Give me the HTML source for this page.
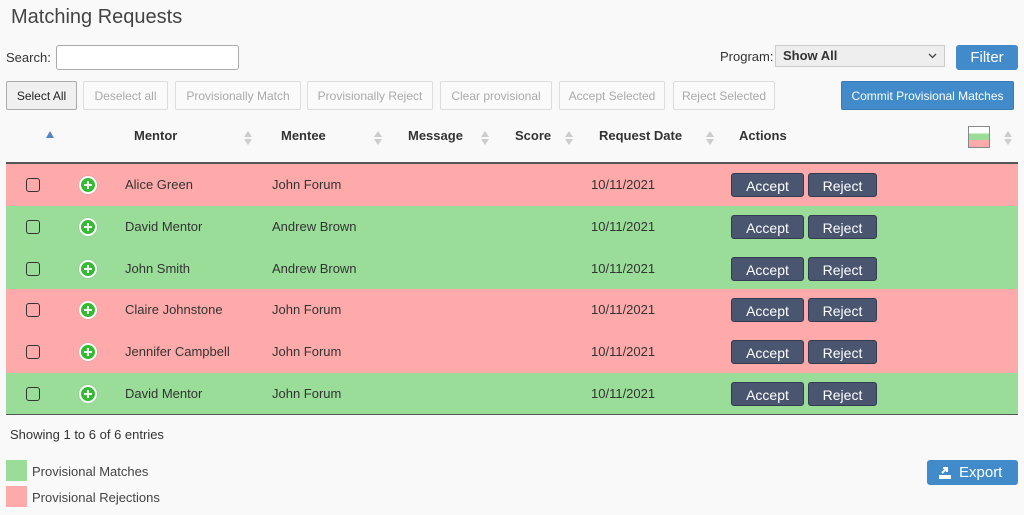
<!DOCTYPE html>
<html><head><style>
body{margin:0;width:1024px;height:515px;background:#f9f9f9;font-family:"Liberation Sans",sans-serif;color:#333;position:relative;overflow:hidden}
.a{position:absolute}
.btn{position:absolute;top:81px;height:29px;border:1px solid #ddd;background:#fafafa;color:#aaa;font-size:12px;line-height:29px;text-align:center;border-radius:2px;box-sizing:border-box}
.h{position:absolute;top:128px;font-size:13px;font-weight:bold;color:#333}
.row{position:absolute;left:6px;width:1012px;height:42px;font-size:13px}
.pink{background:#ffaaaa}.green{background:#99dd99}
.cb{position:absolute;left:20px;top:14px;width:12px;height:12px;border:1px solid #333;border-radius:3px}
.pl{position:absolute;left:73px;top:12px;width:14px;height:14px;border-radius:50%;background:#3b3;border:2px solid #fff;box-shadow:0 0 1px #888}
.pl:before{content:"";position:absolute;left:3px;top:6px;width:8px;height:2px;background:#fff}
.pl:after{content:"";position:absolute;left:6px;top:3px;width:2px;height:8px;background:#fff}
.t{position:absolute;top:13px}
.ac{position:absolute;top:9px;height:24px;background:#4a5570;color:#fff;border:1px solid #333b50;border-radius:3px;font-size:14px;line-height:24px;text-align:center;box-sizing:border-box}
</style></head><body>
<div class="a" style="left:11px;top:6px;font-size:20px;color:#444">Matching Requests</div>
<div class="a" style="left:6px;top:50px;font-size:13px">Search:</div>
<div class="a" style="left:56px;top:45px;width:183px;height:25px;border:1px solid #aaa;border-radius:3px;background:#fff;box-sizing:border-box"></div>
<div class="a" style="left:720px;top:49px;font-size:13px">Program:</div>
<div class="a" style="left:775px;top:45px;width:170px;height:22px;border:1px solid #ccc;background:#eee;box-sizing:border-box;font-size:13px;font-weight:bold;line-height:20px;padding-left:7px">Show All<svg style="position:absolute;right:7px;top:7px" width="9" height="6"><path d="M1 1l3.5 3.5L8 1" stroke="#444" fill="none" stroke-width="1.3"/></svg></div>
<div class="a" style="left:956px;top:45px;width:62px;height:25px;background:#428bca;border-radius:3px;color:#fff;font-size:15px;text-align:center;line-height:26px">Filter</div>
<div class="btn" style="left:6px;width:71px;border-color:#aaa;background:#f0f0f0;color:#222">Select All</div>
<div class="btn" style="left:83px;width:85px">Deselect all</div>
<div class="btn" style="left:175px;width:126px">Provisionally Match</div>
<div class="btn" style="left:307px;width:126px">Provisionally Reject</div>
<div class="btn" style="left:440px;width:112px">Clear provisional</div>
<div class="btn" style="left:559px;width:106px">Accept Selected</div>
<div class="btn" style="left:673px;width:102px">Reject Selected</div>
<div class="btn" style="left:841px;width:173px;background:#428bca;border-color:#3a7ab5;color:#fff">Commit Provisional Matches</div>
<svg class="a" style="left:45px;top:131px" width="10" height="8"><path d="M5 0l4 7H1z" fill="#5585c5"/></svg>
<div class="h" style="left:134px">Mentor</div>
<div class="h" style="left:281px">Mentee</div>
<div class="h" style="left:408px">Message</div>
<div class="h" style="left:515px">Score</div>
<div class="h" style="left:599px">Request Date</div>
<div class="h" style="left:739px">Actions</div>
<div class="a" style="left:968px;top:126px;width:20px;height:20px;border:1px solid #888;background:linear-gradient(#fff 0 33%,#99dd99 33% 66%,#ffaaaa 66%)"></div>
<svg class="a" style="left:240px;top:130px" width="780" height="16"><g fill="#ccc">
<path d="M8 1l4 6H4z"/><path d="M8 15l4-6H4z"/>
<path d="M138 1l4 6h-8z"/><path d="M138 15l4-6h-8z"/>
<path d="M245 1l4 6h-8z"/><path d="M245 15l4-6h-8z"/>
<path d="M329 1l4 6h-8z"/><path d="M329 15l4-6h-8z"/>
<path d="M470 1l4 6h-8z"/><path d="M470 15l4-6h-8z"/>
<path d="M768 1l4 6h-8z"/><path d="M768 15l4-6h-8z"/></g></svg>
<div class="a" style="left:6px;top:162px;width:1012px;height:2px;background:#555"></div>

<div class="row pink" style="top:164px"><div class="cb"></div><div class="pl"></div><div class="t" style="left:119px">Alice Green</div><div class="t" style="left:266px">John Forum</div><div class="t" style="left:585px">10/11/2021</div><div class="ac" style="left:725px;width:73px">Accept</div><div class="ac" style="left:802px;width:69px">Reject</div></div>
<div class="row green" style="top:206px"><div class="cb"></div><div class="pl"></div><div class="t" style="left:119px">David Mentor</div><div class="t" style="left:266px">Andrew Brown</div><div class="t" style="left:585px">10/11/2021</div><div class="ac" style="left:725px;width:73px">Accept</div><div class="ac" style="left:802px;width:69px">Reject</div></div>
<div class="row green" style="top:248px"><div class="cb"></div><div class="pl"></div><div class="t" style="left:119px">John Smith</div><div class="t" style="left:266px">Andrew Brown</div><div class="t" style="left:585px">10/11/2021</div><div class="ac" style="left:725px;width:73px">Accept</div><div class="ac" style="left:802px;width:69px">Reject</div></div>
<div class="row pink" style="top:289px"><div class="cb"></div><div class="pl"></div><div class="t" style="left:119px">Claire Johnstone</div><div class="t" style="left:266px">John Forum</div><div class="t" style="left:585px">10/11/2021</div><div class="ac" style="left:725px;width:73px">Accept</div><div class="ac" style="left:802px;width:69px">Reject</div></div>
<div class="row pink" style="top:331px"><div class="cb"></div><div class="pl"></div><div class="t" style="left:119px">Jennifer Campbell</div><div class="t" style="left:266px">John Forum</div><div class="t" style="left:585px">10/11/2021</div><div class="ac" style="left:725px;width:73px">Accept</div><div class="ac" style="left:802px;width:69px">Reject</div></div>
<div class="row green" style="top:373px"><div class="cb"></div><div class="pl"></div><div class="t" style="left:119px">David Mentor</div><div class="t" style="left:266px">John Forum</div><div class="t" style="left:585px">10/11/2021</div><div class="ac" style="left:725px;width:73px">Accept</div><div class="ac" style="left:802px;width:69px">Reject</div></div>
<div class="a" style="left:6px;top:414px;width:1012px;height:1px;background:#555"></div>
<div class="a" style="left:10px;top:427px;font-size:13px">Showing 1 to 6 of 6 entries</div>
<div class="a" style="left:6px;top:460px;width:21px;height:21px;background:#99dd99"></div>
<div class="a" style="left:32px;top:464px;font-size:13px;color:#444">Provisional Matches</div>
<div class="a" style="left:6px;top:486px;width:21px;height:21px;background:#ffaaaa"></div>
<div class="a" style="left:32px;top:490px;font-size:13px;color:#444">Provisional Rejections</div>
<div class="a" style="left:927px;top:460px;width:91px;height:25px;background:#428bca;border-radius:3px;color:#fff;font-size:15px;line-height:26px"><svg style="position:absolute;left:11px;top:5px" width="14" height="15"><path d="M1 10h12v4H1z" fill="#fff"/><path d="M4 8l5-5M5 3h4v4" stroke="#fff" stroke-width="2" fill="none"/></svg><span style="position:absolute;left:32px">Export</span></div>
</body></html>
